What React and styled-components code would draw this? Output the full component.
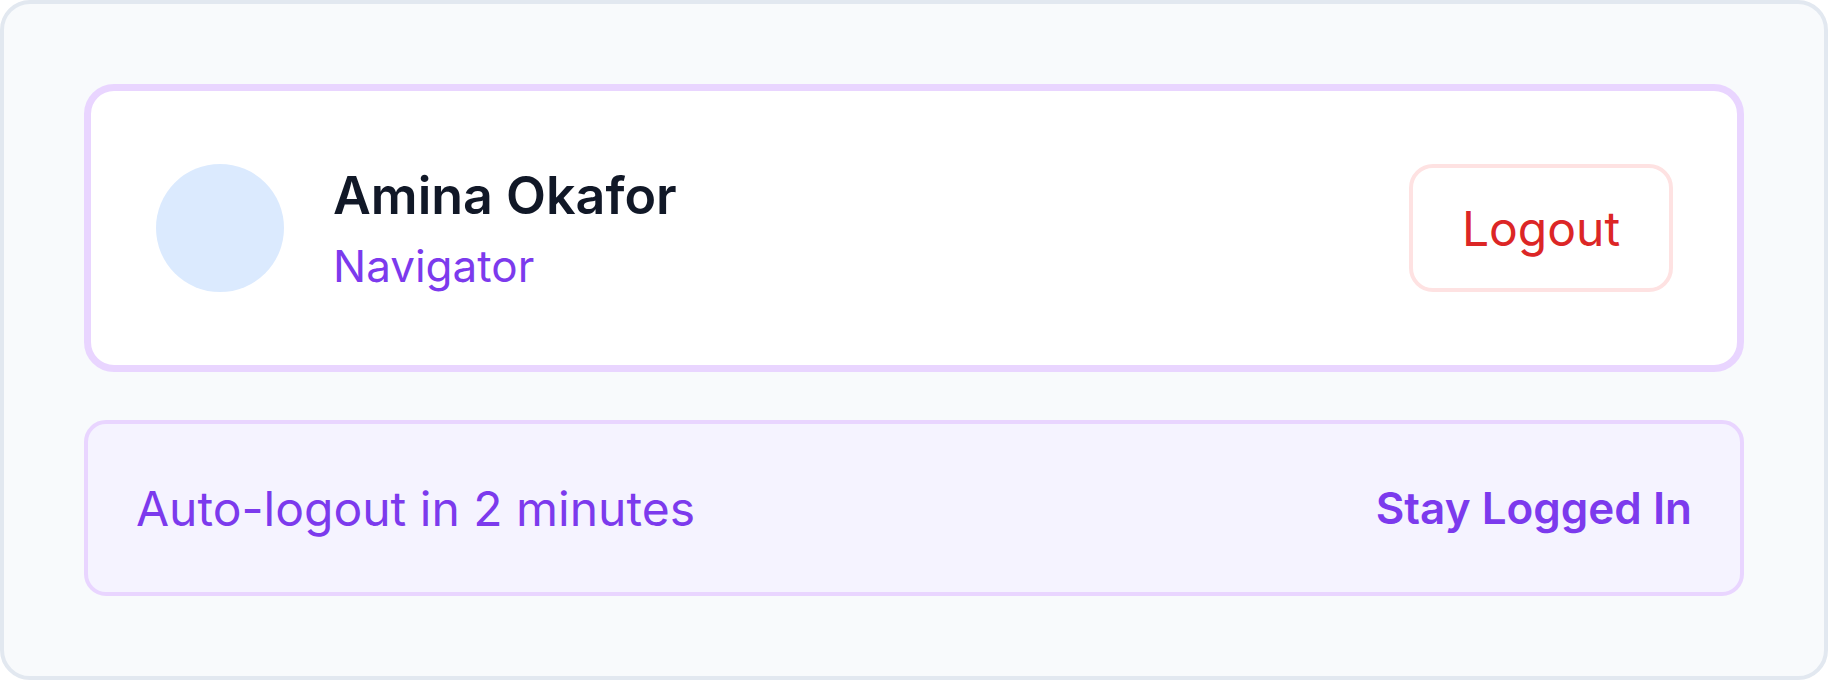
import styled, { createGlobalStyle } from 'styled-components'

const GlobalStyle = createGlobalStyle`
    html, body {
        margin: 0;
        padding: 0;
    }
    body {
        font-family: Inter, "Noto Sans", sans-serif;
    }
    * {
        box-sizing: border-box;
    }
`

const Frame = styled.div`
    width: 1828px;
    height: 680px;
    padding: 80px;
    display: flex;
    flex-direction: column;
    gap: 48px;
    background-color: #f8fafc;
    border: 4px solid #e2e8f0;
    border-radius: 30px;
`

const ProfileCard = styled.div`
    height: 288px;
    display: flex;
    align-items: center;
    padding: 0 64px 0 65px;
    background-color: #ffffff;
    border: 7px solid #e9d5ff;
    border-radius: 30px;
`

const Avatar = styled.div`
    width: 128px;
    height: 128px;
    flex-shrink: 0;
    border-radius: 50%;
    background-color: #dbeafe;
`

const Info = styled.div`
    flex-grow: 1;
    margin-left: 49px;
    display: flex;
    flex-direction: column;
    gap: 12px;
`

const Name = styled.div`
    font-size: 52px;
    line-height: 64px;
    font-weight: 600;
    color: #111827;
`

const Role = styled.div`
    font-size: 44px;
    line-height: 52px;
    color: #7c3aed;
`

const LogoutButton = styled.button`
    width: 264px;
    height: 128px;
    font-family: inherit;
    font-size: 48px;
    color: #dc2626;
    background-color: #ffffff;
    border: 4px solid #fee2e2;
    border-radius: 24px;
    cursor: pointer;
`

const TimeoutBar = styled.div`
    height: 176px;
    display: flex;
    align-items: center;
    justify-content: space-between;
    padding: 0 48px;
    background-color: #f5f3ff;
    border: 4px solid #e9d5ff;
    border-radius: 22px;
`

const TimeoutText = styled.span`
    font-size: 48px;
    color: #7c3aed;
`

const StayButton = styled.button`
    padding: 0;
    font-family: inherit;
    font-size: 44px;
    font-weight: 600;
    color: #7c3aed;
    background: none;
    border: none;
    cursor: pointer;
`

const App = () => {
    return (
        <>
            <GlobalStyle />
            <Frame>
                <ProfileCard>
                    <Avatar />
                    <Info>
                        <Name>Amina Okafor</Name>
                        <Role>Navigator</Role>
                    </Info>
                    <LogoutButton>Logout</LogoutButton>
                </ProfileCard>
                <TimeoutBar>
                    <TimeoutText>Auto-logout in 2 minutes</TimeoutText>
                    <StayButton>Stay Logged In</StayButton>
                </TimeoutBar>
            </Frame>
        </>
    )
}

export default App
